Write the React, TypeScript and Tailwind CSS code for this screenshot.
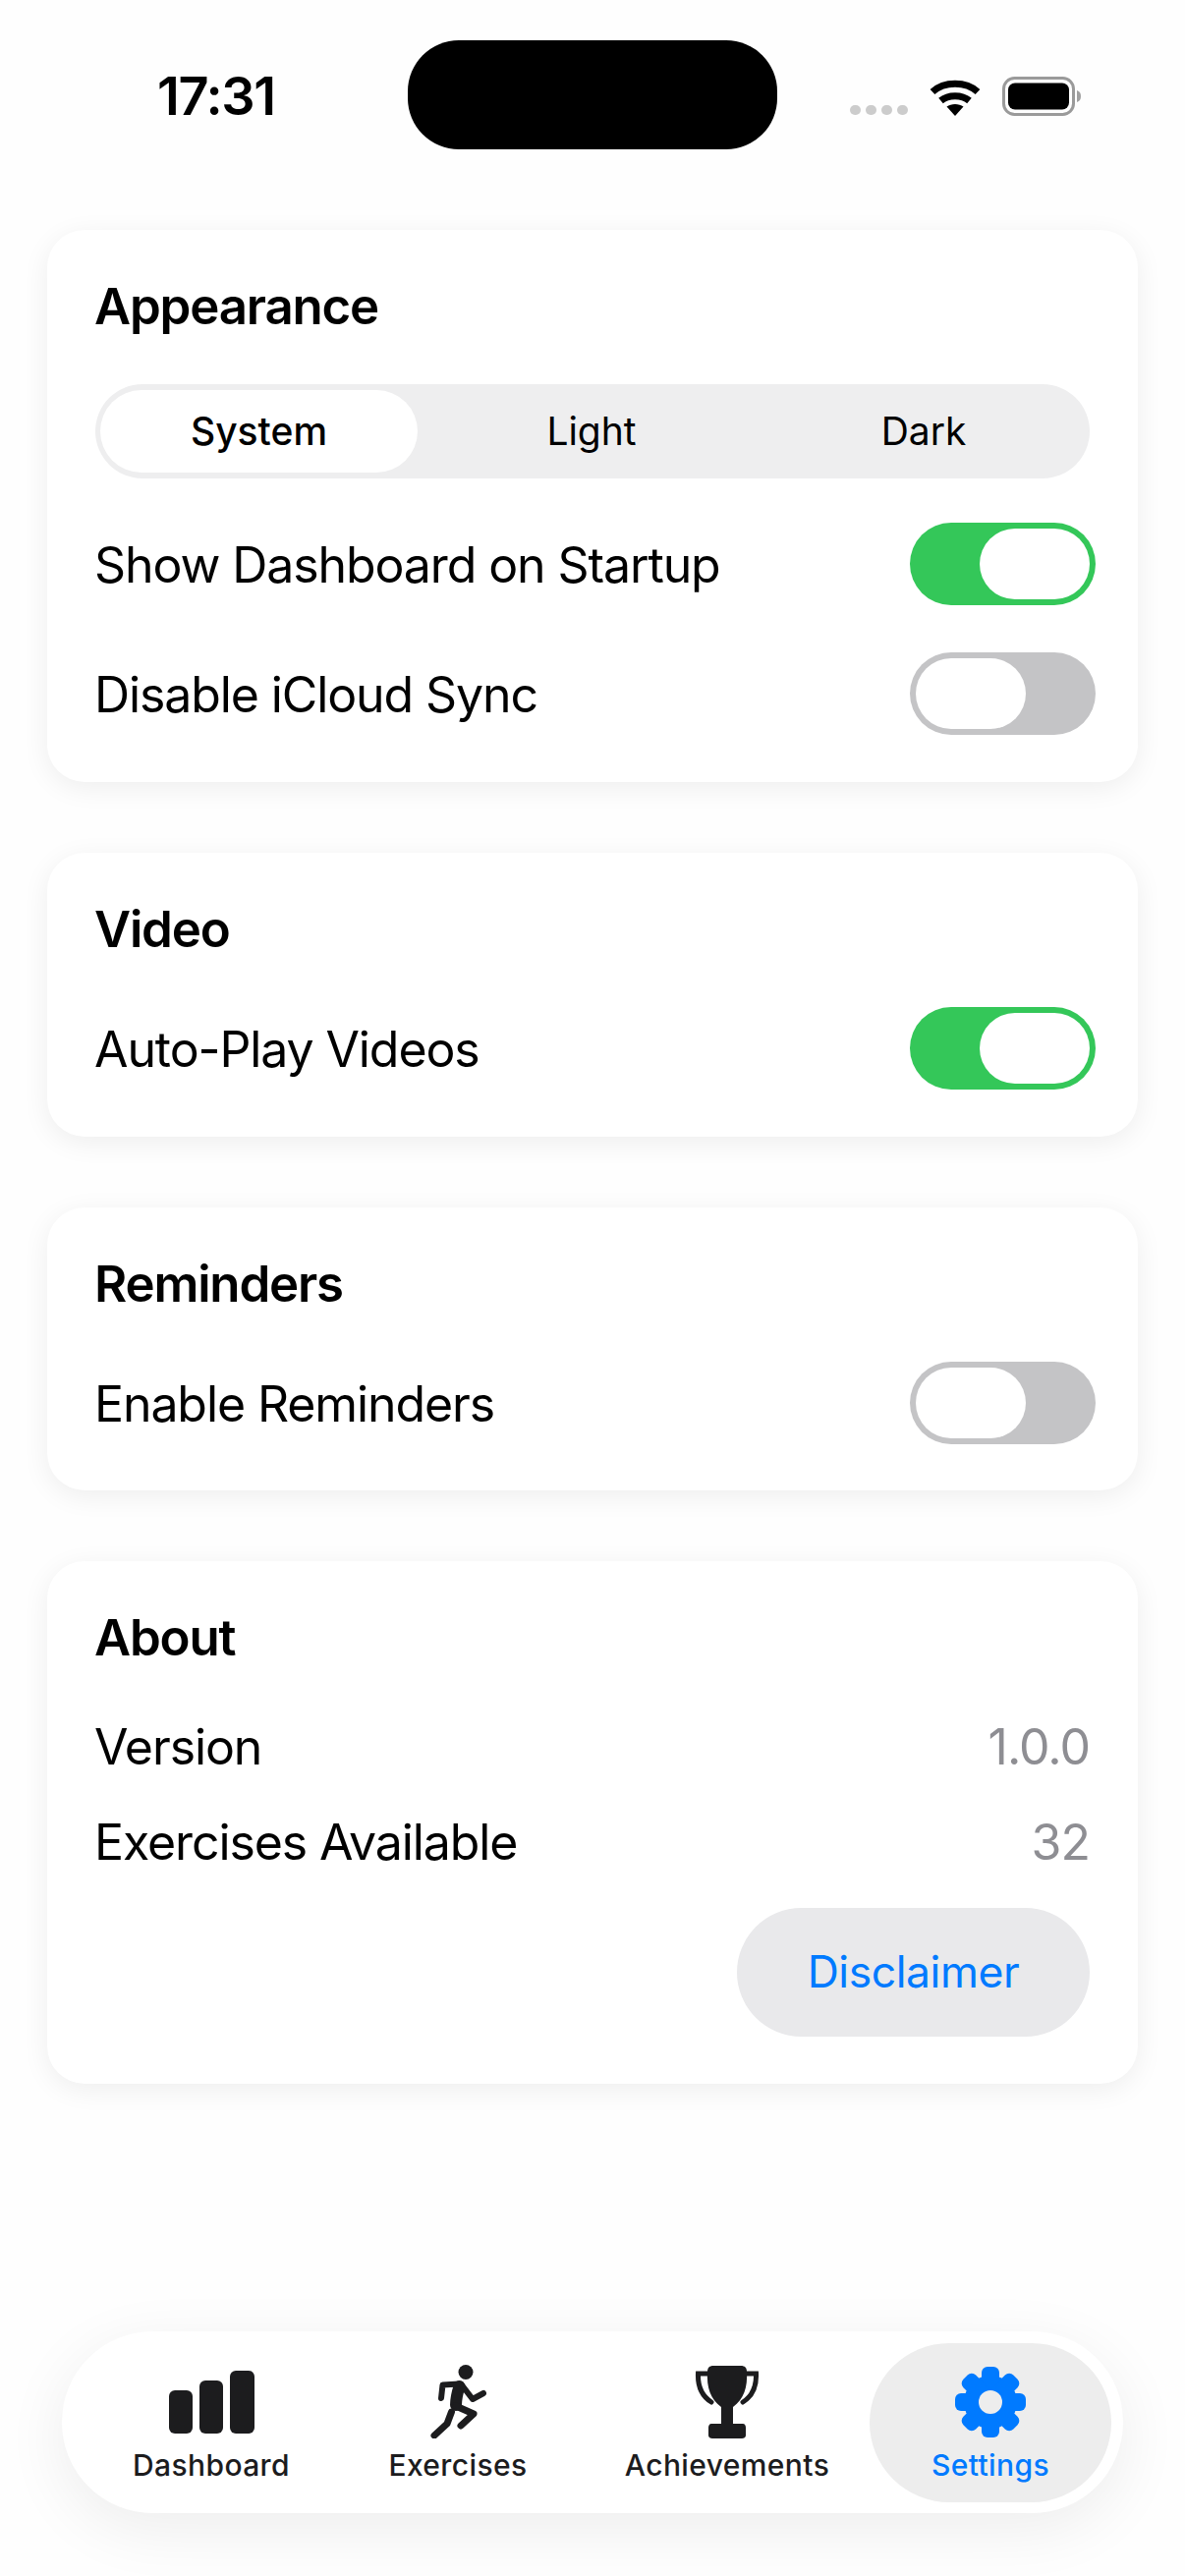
import React from "react";

const font = "font-['Inter','Noto_Sans',sans-serif]";

function Toggle({ on }: { on: boolean }) {
  return (
    <div
      className={`-mr-[6px] flex h-[84px] w-[189px] shrink-0 items-center rounded-full px-[6px] ${
        on ? "justify-end bg-[#34C759]" : "justify-start bg-[#C4C4C6]"
      }`}
    >
      <div className="h-[72px] w-[112px] rounded-full bg-white" />
    </div>
  );
}

function Card({ title, children, className = "pb-[48px]" }: { title: string; children: React.ReactNode; className?: string }) {
  return (
    <section className={`rounded-[38px] bg-white px-[49px] pt-[48px] shadow-[0_6px_28px_rgba(0,0,0,0.065)] ${className}`}>
      <h2 className="-ml-px h-[60px] text-[51px] leading-[60px] font-semibold tracking-[-0.023em] text-black">{title}</h2>
      {children}
    </section>
  );
}

function ToggleRow({ label, on, className }: { label: string; on: boolean; className: string }) {
  return (
    <div className={`flex h-[84px] items-center justify-between ${className}`}>
      <span className="-ml-px translate-y-[1px] text-[50px] tracking-[-0.022em] text-black">{label}</span>
      <Toggle on={on} />
    </div>
  );
}

function InfoRow({ label, value, className }: { label: string; value: string; className: string }) {
  return (
    <div className={`flex h-[60px] items-center justify-between ${className}`}>
      <span className="-ml-px text-[50px] tracking-[-0.022em] text-black">{label}</span>
      <span className="text-[50px] tracking-[-0.02em] text-[#8E8E93]">{value}</span>
    </div>
  );
}

function Wifi() {
  return (
    <svg width="52" height="38" viewBox="0 0 52 38" fill="none" stroke="#000" strokeWidth="7">
      <path d="M3 13.5C15 2.5 37 2.5 49 13.5" />
      <path d="M11.5 22.5C19 16 33 16 40.5 22.5" />
      <path d="M26 38L17.5 28.5C22 25 30 25 34.5 28.5Z" fill="#000" stroke="none" />
    </svg>
  );
}

function Battery() {
  return (
    <svg width="80" height="40" viewBox="0 0 80 40">
      <rect x="1.5" y="1.5" width="71" height="37" rx="11" fill="none" stroke="#9a9a9a" strokeWidth="3" />
      <rect x="6" y="6.5" width="62" height="27" rx="7" fill="#000" />
      <path d="M76 14c3 1 4 3 4 6s-1 5-4 6z" fill="#a0a0a0" />
    </svg>
  );
}

function DashboardIcon() {
  return (
    <svg width="87" height="64" viewBox="0 0 87 64" fill="#1C1C1E">
      <rect x="0" y="20" width="24" height="44" rx="6" />
      <rect x="31" y="10" width="24" height="54" rx="6" />
      <rect x="62" y="0" width="25" height="64" rx="6" />
    </svg>
  );
}

function RunnerIcon() {
  return (
    <svg width="57" height="75" viewBox="0 0 57 75" fill="none" stroke="#1C1C1E" strokeLinecap="round" strokeLinejoin="round">
      <ellipse cx="36" cy="7.5" rx="7.5" ry="7.5" fill="#1C1C1E" stroke="none" />
      <path d="M11 34L12.5 20.5L29 19.5" strokeWidth="6" />
      <path d="M29.5 22C27 30 26 36 26 41" strokeWidth="12" />
      <path d="M33 22L43 35L54 29" strokeWidth="6" />
      <path d="M26 42L44 50L31 62" strokeWidth="7" />
      <path d="M21.5 48L17 60L4 72" strokeWidth="7" />
    </svg>
  );
}

function TrophyIcon() {
  return (
    <svg width="66" height="74" viewBox="0 0 66 74" fill="none">
      <path d="M13 8H3.5C3 20 6 30 17 37M53 8H62.5C63 20 60 30 49 37" stroke="#1C1C1E" strokeWidth="5" strokeLinecap="round" />
      <path
        d="M19 0H47C51 0 53 2 53 6C54 22 50 34 39 42V59H49C51 59 52 61 52 63V71C52 73 50 74 48 74H18C16 74 14 73 14 71V63C14 61 15 59 17 59H27V42C16 34 12 22 13 6C13 2 15 0 19 0Z"
        fill="#1C1C1E"
      />
    </svg>
  );
}

function GearIcon() {
  return (
    <svg width="72" height="72" viewBox="0 0 72 72" fill="#007AFF">
      <circle cx="36" cy="36" r="27" />
      <rect x="27" y="0" width="18" height="72" rx="6" />
      <rect x="27" y="0" width="18" height="72" rx="6" transform="rotate(45 36 36)" />
      <rect x="27" y="0" width="18" height="72" rx="6" transform="rotate(90 36 36)" />
      <rect x="27" y="0" width="18" height="72" rx="6" transform="rotate(135 36 36)" />
      <circle cx="36" cy="36" r="12" fill="#EDEDED" />
    </svg>
  );
}

function Tab({
  label,
  icon,
  className,
  active,
}: {
  label: string;
  icon: React.ReactNode;
  className: string;
  active?: boolean;
}) {
  return (
    <div className={`flex h-[162px] flex-col items-center rounded-full pt-[22px] ${className}`}>
      <div className="flex h-[76px] items-center justify-center">{icon}</div>
      <span
        className={`mt-[8px] text-[30px] leading-[36px] font-medium tracking-[0.013em] ${active ? "text-[#007AFF]" : "text-[#1C1C1E]"}`}
      >
        {label}
      </span>
    </div>
  );
}

export default function App() {
  return (
    <div className={`${font} flex h-[2622px] w-[1206px] flex-col overflow-hidden bg-[#FEFEFE]`}>
      <header className="h-[234px] pt-[76px] pl-[160px]">
        <span className="block text-[54px] leading-[44px] font-semibold tracking-[-0.025em] text-black">17:31</span>
      </header>
      <div className="absolute top-[41px] left-[415px] h-[111px] w-[376px] rounded-[52px] bg-black" />
      <div className="absolute top-[78px] left-[865px] flex items-end gap-[22px]">
        <div className="mb-[1px] flex gap-[5px]">
          {[0, 1, 2, 3].map((i) => (
            <div key={i} className="h-[10px] w-[11px] rounded-full bg-[#CCCCCC]" />
          ))}
        </div>
        <Wifi />
        <Battery />
      </div>

      <main className="flex flex-col gap-[72px] px-[48px]">
        <Card title="Appearance">
          <div className="mt-[49px] flex h-[96px] rounded-full bg-[#EEEEEF] text-[39px] text-black">
            <div className="flex w-[336px] shrink-0 items-center py-[6px] pr-[8px] pl-[5px]">
              <div className="flex h-full w-full items-center justify-center rounded-full bg-white font-medium">System</div>
            </div>
            <div className="flex flex-1 items-center justify-center">Light</div>
            <div className="flex flex-1 items-center justify-center">Dark</div>
          </div>
          <ToggleRow label="Show Dashboard on Startup" on className="mt-[45px]" />
          <ToggleRow label="Disable iCloud Sync" on={false} className="mt-[48px]" />
        </Card>
        <Card title="Video">
          <ToggleRow label="Auto-Play Videos" on className="mt-[49px]" />
        </Card>
        <Card title="Reminders" className="pb-[47px]">
          <ToggleRow label="Enable Reminders" on={false} className="mt-[49px]" />
        </Card>
        <Card title="About">
          <InfoRow label="Version" value="1.0.0" className="mt-[51px]" />
          <InfoRow label="Exercises Available" value="32" className="mt-[37px]" />
          <div className="mt-[37px] flex justify-end">
            <button className="h-[131px] w-[359px] rounded-full bg-[#E9E9EB] text-[44.5px] tracking-[-0.01em] text-[#007AFF]">
              Disclaimer
            </button>
          </div>
        </Card>
      </main>

      <nav className="mx-[63px] mt-auto mb-[64px] flex h-[185px] items-center rounded-full bg-white pr-[10px] pl-[42px] shadow-[0_16px_64px_rgba(0,0,0,0.07)]">
        <Tab label="Dashboard" icon={<DashboardIcon />} className="w-[220px]" />
        <Tab label="Exercises" icon={<RunnerIcon />} className="w-[282px]" />
        <Tab label="Achievements" icon={<TrophyIcon />} className="w-[266px]" />
        <Tab label="Settings" icon={<GearIcon />} active className="ml-[12px] w-[246px] bg-[#EDEDED]" />
      </nav>
    </div>
  );
}
